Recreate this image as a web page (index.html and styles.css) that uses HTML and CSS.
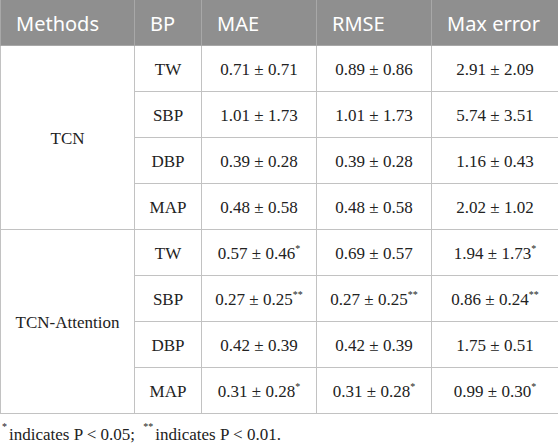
FILE: index.html
```html
<!DOCTYPE html>
<html>
<head>
<meta charset="utf-8">
<link rel="stylesheet" href="styles.css">
</head>
<body>
<table class="data">
  <colgroup>
    <col class="c1"><col class="c2"><col class="c3"><col class="c4"><col class="c5">
  </colgroup>
  <thead>
    <tr><th>Methods</th><th>BP</th><th>MAE</th><th>RMSE</th><th>Max error</th></tr>
  </thead>
  <tbody>
    <tr><td rowspan="4">TCN</td><td>TW</td><td>0.71 ± 0.71</td><td>0.89 ± 0.86</td><td>2.91 ± 2.09</td></tr>
    <tr><td>SBP</td><td>1.01 ± 1.73</td><td>1.01 ± 1.73</td><td>5.74 ± 3.51</td></tr>
    <tr><td>DBP</td><td>0.39 ± 0.28</td><td>0.39 ± 0.28</td><td>1.16 ± 0.43</td></tr>
    <tr><td>MAP</td><td>0.48 ± 0.58</td><td>0.48 ± 0.58</td><td>2.02 ± 1.02</td></tr>
    <tr><td rowspan="4">TCN-Attention</td><td>TW</td><td>0.57 ± 0.46<sup>*</sup></td><td>0.69 ± 0.57</td><td>1.94 ± 1.73<sup>*</sup></td></tr>
    <tr><td>SBP</td><td>0.27 ± 0.25<sup>**</sup></td><td>0.27 ± 0.25<sup>**</sup></td><td>0.86 ± 0.24<sup>**</sup></td></tr>
    <tr><td>DBP</td><td>0.42 ± 0.39</td><td>0.42 ± 0.39</td><td>1.75 ± 0.51</td></tr>
    <tr><td>MAP</td><td>0.31 ± 0.28<sup>*</sup></td><td>0.31 ± 0.28<sup>*</sup></td><td>0.99 ± 0.30<sup>*</sup></td></tr>
  </tbody>
</table>
<p class="note"><sup>*</sup>indicates P &lt; 0.05; <sup class="gap">**</sup>indicates P &lt; 0.01.</p>
</body>
</html>
```
FILE: styles.css
```css
html, body {
  margin: 0;
  padding: 0;
  background: #ffffff;
}
.data {
  border-collapse: collapse;
  table-layout: fixed;
  width: 558px;
  font-family: "Liberation Serif", serif;
  font-size: 17px;
  color: #222;
}
.c1 { width: 134px; }
.c2 { width: 67px; }
.c3 { width: 115px; }
.c4 { width: 115px; }
.c5 { width: 127px; }
.data th {
  background: #8f8f8f;
  color: #ffffff;
  font-family: "Noto Sans", "Open Sans", sans-serif;
  font-weight: normal;
  font-size: 20px;
  text-align: left;
  padding: 1px 0 0 15px;
  height: 44px;
  border: 1px solid #a8a8a8;
  border-top: none;
}
.data td {
  text-align: center;
  vertical-align: middle;
  height: 42px;
  padding: 3px 0 0 0;
  border: 1px solid #c2c2c2;
}
.data sup {
  font-size: 10px;
  vertical-align: 7px;
  line-height: 0;
}
.note {
  margin: 11px 0 0 2px;
  font-family: "Liberation Serif", serif;
  font-size: 17px;
  color: #222;
}
.note sup {
  font-size: 10px;
  vertical-align: 10px;
  line-height: 0;
  margin-right: 2px;
}
.note .gap {
  margin-left: 4px;
}
```
